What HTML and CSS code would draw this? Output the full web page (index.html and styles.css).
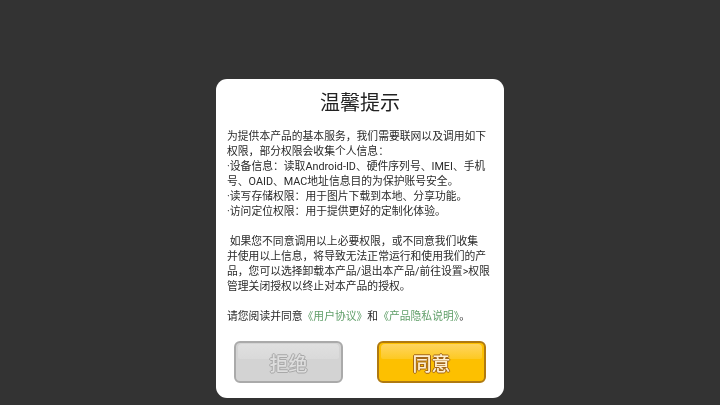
FILE: index.html
```html
<!DOCTYPE html>
<html lang="zh-CN">
<head>
  <meta charset="utf-8">
  <title>温馨提示</title>
  <link rel="stylesheet" href="styles.css">
</head>
<body>
  <div class="screen">
    <div class="dialog">
      <h2 class="dialog-title">温馨提示</h2>
      <div class="dialog-text">
        <p>为提供本产品的基本服务，我们需要联网以及调用如下<br>权限，部分权限会收集个人信息<span class="colon">：</span><br>·设备信息<span class="colon">：</span>读取Android-ID、硬件序列号、IMEI、手机<br>号、OAID、MAC地址信息目的为保护账号安全。<br>·读写存储权限<span class="colon">：</span>用于图片下载到本地、分享功能。<br>·访问定位权限<span class="colon">：</span>用于提供更好的定制化体验。</p>
        <p>&nbsp;如果您不同意调用以上必要权限，或不同意我们收集<br>并使用以上信息，将导致无法正常运行和使用我们的产<br>品，您可以选择卸载本产品/退出本产品/前往设置&gt;权限<br>管理关闭授权以终止对本产品的授权。</p>
        <p>请您阅读并同意<a href="#">《用户协议》</a>和<a href="#">《产品隐私说明》</a>。</p>
      </div>
      <div class="dialog-buttons">
        <button class="btn btn-refuse"><span class="btn-label">拒绝</span></button>
        <button class="btn btn-agree"><span class="btn-label">同意</span></button>
      </div>
    </div>
  </div>
</body>
</html>
```
FILE: styles.css
```css
* {
  box-sizing: border-box;
}

body {
  margin: 0;
  background-color: #333333;
  font-family: Roboto, "Noto Sans CJK SC", sans-serif;
}

.screen {
  width: 720px;
  height: 405px;
  padding-top: 79px;
  overflow: hidden;
}

.dialog {
  width: 288px;
  height: 319px;
  margin-left: 216px;
  padding: 0 18px 15px 11px;
  background-color: #fff;
  border-radius: 11px;
  display: flex;
  flex-direction: column;
}

.dialog-title {
  margin: 10px 0 0;
  padding-left: 7px;
  font-size: 20px;
  line-height: 28px;
  font-weight: 400;
  text-align: center;
  color: #222;
  filter: blur(0.4px);
}

.dialog-text {
  margin-top: 12px;
  font-size: 10.8px;
  line-height: 15px;
  color: #2a2a2a;
  white-space: nowrap;
  filter: blur(0.4px);
}

.dialog-text p {
  margin: 0 0 15px;
}

.dialog-text a {
  color: #5f9e68;
  text-decoration: none;
}

/* colon sits in the middle of its cell on the device font */
.colon {
  font-family: "Noto Sans CJK JP", sans-serif;
  line-height: 0;
}

.dialog-buttons {
  margin-top: auto;
  padding-left: 7px;
  display: flex;
  justify-content: space-between;
}

.btn {
  position: relative;
  width: 109px;
  height: 42px;
  padding: 0;
  border-radius: 6px;
  font-family: inherit;
  font-size: 19px;
  font-weight: 500;
  filter: blur(0.5px);
}

/* gloss strip along the top of the button */
.btn::before {
  content: "";
  position: absolute;
  top: 1px;
  left: 2px;
  right: 2px;
  height: 15px;
  border-radius: 4px 4px 2px 2px;
}

.btn-label {
  position: relative;
}

.btn-refuse {
  border: 2px solid #aaaaaa;
  background-color: #d3d3d3;
  color: #dedede;
  text-shadow: -1px 0 #a8a8a8, 1px 0 #a8a8a8, 0 -1px #a8a8a8, 0 1px #a8a8a8;
}

.btn-refuse::before {
  background: linear-gradient(#e0e0e0, #d9d9d9);
}

.btn-agree {
  border: 2px solid #b07a10;
  background-color: #fdc000;
  color: #fff0d0;
  text-shadow: -1px 0 #a3661a, 1px 0 #a3661a, 0 -1px #a3661a, 0 1px #a3661a;
}

.btn-agree::before {
  background: linear-gradient(#ffd560, #fdc922);
}
```
